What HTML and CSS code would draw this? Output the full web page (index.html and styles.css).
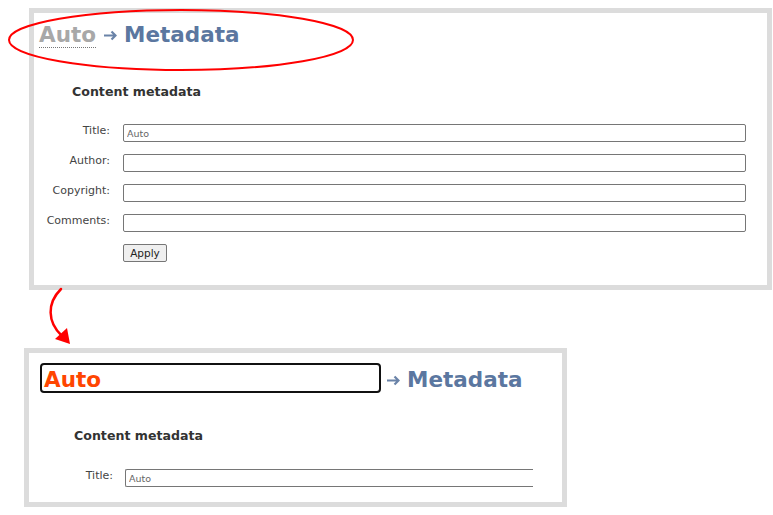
FILE: index.html
```html
<!DOCTYPE html>
<html lang="en">
<head>
    <meta charset="UTF-8">
    <meta name="viewport" content="width=device-width, initial-scale=1.0">
    <title>Metadata</title>
    <link rel="stylesheet" href="styles.css">
</head>
<body>
    <div class="shot shot-full">
        <h1 class="crumbs">
            <span class="crumb-link">Auto</span>
            <svg class="arrow" width="13" height="11" viewBox="0 0 13 11"><path d="M0 5.5H11.5M7.5 1.5L11.5 5.5L7.5 9.5" fill="none" stroke="#6a83a8" stroke-width="2.2"/></svg>
            <span class="crumb-current">Metadata</span>
        </h1>
        <h2 class="section">Content metadata</h2>
        <form class="meta-form">
            <label for="title">Title:</label>
            <input type="text" id="title" value="Auto">

            <label for="author">Author:</label>
            <input type="text" id="author">

            <label for="copyright">Copyright:</label>
            <input type="text" id="copyright">

            <label for="comments">Comments:</label>
            <input type="text" id="comments">

            <span></span>
            <div class="actions"><button type="button">Apply</button></div>
        </form>
    </div>

    <div class="shot shot-crop">
        <h1 class="crumbs">
            <span class="crumb-edit">Auto</span>
            <svg class="arrow" width="13" height="11" viewBox="0 0 13 11"><path d="M0 5.5H11.5M7.5 1.5L11.5 5.5L7.5 9.5" fill="none" stroke="#6a83a8" stroke-width="2.2"/></svg>
            <span class="crumb-current">Metadata</span>
        </h1>
        <h2 class="section">Content metadata</h2>
        <form class="meta-form cut">
            <label for="title2">Title:</label>
            <input type="text" id="title2" value="Auto">
        </form>
    </div>

    <!-- annotations drawn over the screenshots -->
    <svg class="marks" width="773" height="515" viewBox="0 0 773 515">
        <ellipse cx="181" cy="40" rx="172" ry="30" fill="none" stroke="#f00" stroke-width="2"/>
        <path d="M61 289 C47 303, 47 322, 62 336" fill="none" stroke="#f00" stroke-width="2.5" stroke-linecap="round"/>
        <polygon points="55,339 70,344 67,328" fill="#f00"/>
    </svg>
</body>
</html>
```

FILE: styles.css
```css
body {
    margin: 0;
    font-family: "DejaVu Sans", Verdana, sans-serif;
    background-color: #fff;
    position: relative;
    width: 773px;
    height: 515px;
    overflow: hidden;
}
.shot {
    box-sizing: border-box;
    border: 5px solid #dcdcdc;
    background-color: #fff;
}
.shot-full {
    margin: 8px 0 0 29px;
    width: 743px;
    height: 282px;
    padding: 9px 21px 0 5px;
}
.shot-crop {
    margin: 58px 0 0 24px;
    width: 543px;
    height: 159px;
    padding: 10px 0 0 11px;
}
.crumbs {
    margin: 0;
    font-size: 21.5px;
    line-height: 26px;
    font-weight: bold;
    white-space: nowrap;
}
.crumb-link {
    color: #a8a8a8;
    border-bottom: 1px dotted #777;
}
.crumb-current {
    color: #5b77a0;
}
.arrow {
    vertical-align: 1px;
}
.crumb-edit {
    display: inline-block;
    box-sizing: border-box;
    width: 341px;
    height: 30px;
    padding: 2px 0 0 2px;
    border: 2px solid #111;
    border-radius: 4px;
    color: #ff4500;
    vertical-align: baseline;
}
.shot-crop .arrow {
    margin-left: -2px;
}
.section {
    margin: 36px 0 0 33px;
    font-size: 12.6px;
    line-height: 16px;
    font-weight: bold;
    color: #333;
}
.shot-crop .section {
    margin: 35px 0 0 34px;
}
.meta-form {
    display: grid;
    grid-template-columns: 71px 1fr;
    column-gap: 13px;
    row-gap: 12px;
    margin-top: 24px;
}
.meta-form label {
    font-size: 11px;
    line-height: 13px;
    color: #444;
    text-align: right;
}
.meta-form input {
    box-sizing: border-box;
    height: 18px;
    margin: 0;
    padding: 0 3px;
    font-family: "DejaVu Sans", Verdana, sans-serif;
    font-size: 9.5px;
    color: #666;
    border: 1px solid #767676;
    border-radius: 2px;
    outline: none;
}
.actions {
    display: flex;
}
.meta-form button {
    box-sizing: border-box;
    width: 44px;
    height: 18px;
    padding: 0;
    font-family: "DejaVu Sans", Verdana, sans-serif;
    font-size: 10.5px;
    color: #222;
    background-color: #efefef;
    border: 1px solid #767676;
    border-radius: 2px;
}
.meta-form.cut {
    grid-template-columns: 73px 408px;
    column-gap: 12px;
    margin-top: 25px;
}
.meta-form.cut input {
    border-right: none;
    border-radius: 2px 0 0 2px;
}
.marks {
    position: absolute;
    top: 0;
    left: 0;
    pointer-events: none;
}
```
